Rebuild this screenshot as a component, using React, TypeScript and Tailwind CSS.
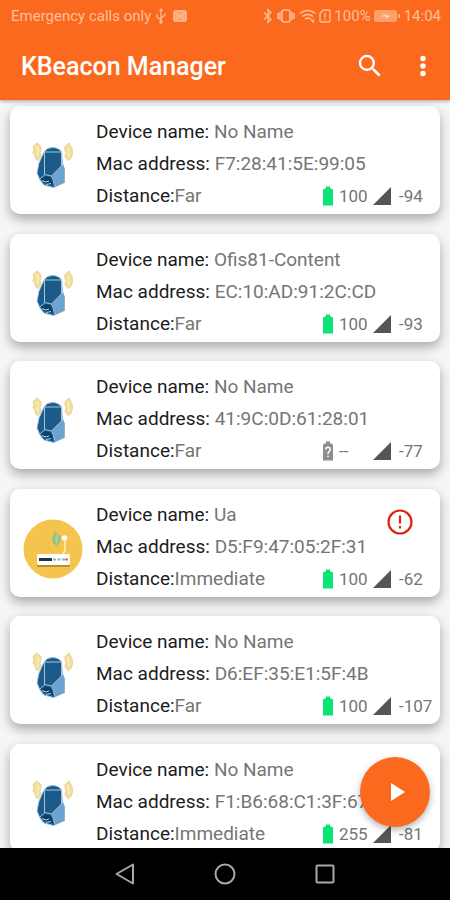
import React from "react";

type Device = {
  kind: "tag" | "gateway";
  name: string;
  mac: string;
  distance: string;
  battery: string | null;
  rssi: number;
  alert?: boolean;
};

const devices: Device[] = [
  { kind: "tag", name: "No Name", mac: "F7:28:41:5E:99:05", distance: "Far", battery: "100", rssi: -94 },
  { kind: "tag", name: "Ofis81-Content", mac: "EC:10:AD:91:2C:CD", distance: "Far", battery: "100", rssi: -93 },
  { kind: "tag", name: "No Name", mac: "41:9C:0D:61:28:01", distance: "Far", battery: null, rssi: -77 },
  { kind: "gateway", name: "Ua", mac: "D5:F9:47:05:2F:31", distance: "Immediate", battery: "100", rssi: -62, alert: true },
  { kind: "tag", name: "No Name", mac: "D6:EF:35:E1:5F:4B", distance: "Far", battery: "100", rssi: -107 },
  { kind: "tag", name: "No Name", mac: "F1:B6:68:C1:3F:67", distance: "Immediate", battery: "255", rssi: -81 },
];

function TagIcon() {
  return (
    <svg viewBox="0 0 60 60" className="mt-1 size-[60px]" aria-hidden="true">
      <g fill="#f3dfa0" stroke="#ead08a" strokeWidth="1">
        <path d="M14 7l4 3.500v4l-1 2 1 4-3 4-2-1-1-4-2-3 1-3-1-3z" />
        <path d="M46 7l-4 3.500v4l1 2-1 4 3 4 3-2 1.500-5-.5-5z" />
      </g>
      <path d="M14 11l1.500 4-1.500 5M46 11l-1 4 1.500 5" fill="none" stroke="#fbf3d8" strokeWidth="1" />
      <path d="M21 16q3-4.500 8-4.500 7 0 9.500 4.500l1 12 2 5v13.500l-5.500 2.500-5.500 2.500-9.500-2.500-4-5-3-7 2-10z" fill="#1c5a88" stroke="#9cc6e4" strokeWidth="1" strokeLinejoin="round" />
      <path d="M40 28.500l1.500 4v14l-5.500 2.500-4.500 1.500-1-6-1.500-5z" fill="#6ca3d0" />
      <path d="M21.500 16v22.500l7 1.500L40 28.500M21.500 16h17M38.500 16v14M28.500 40l2 4.500 1 5M17 43l5-4.500" fill="none" stroke="#9cc6e4" strokeWidth="1" />
      <path d="M18 42.500l5-2.500 5 2 2 7-7-1.500z" fill="#123f66" />
      <path d="M19 44.500l4 1.500 3-1M23 48.500l5-1" fill="none" stroke="#a9d0ea" strokeWidth="1" />
    </svg>
  );
}

function GatewayIcon() {
  return (
    <svg viewBox="0 0 60 60" className="mt-1 size-[60px]" aria-hidden="true">
      <circle cx="30" cy="30" r="29.500" fill="#f4c44f" />
      <path d="M33 13l3 4 1 4-3 6-4-4v-5z" fill="#8fc98c" stroke="#7dbb87" />
      <path d="M34 14v12" stroke="#c4d98c" />
      <circle cx="41.500" cy="19" r="2.800" fill="#fffdf5" />
      <path d="M42 20v11l-2 4" fill="none" stroke="#fff3c9" strokeWidth="1.500" />
      <rect x="14" y="37" width="33" height="11" rx="1.500" fill="#b78f3a" />
      <rect x="14" y="35" width="33" height="11" rx="1.500" fill="#fffefb" />
      <rect x="16" y="39" width="13" height="3" fill="#233449" />
      <path d="M30 40.500h12" stroke="#7fb9c4" strokeWidth="2" strokeDasharray="3 1.500" />
      <circle cx="43.500" cy="40.500" r="1.200" fill="#d9483b" />
    </svg>
  );
}

function BatteryIcon({ known }: { known: boolean }) {
  return (
    <svg viewBox="0 0 10 20" className="h-5 w-[10px] shrink-0" aria-hidden="true">
      <path d="M3 0.500h4v1.500l3 1.500v16H0v-16L3 2z" fill={known ? "#0ce575" : "#8d8d8d"} />
      {!known && (
        <path
          d="M2.700 8.500c0-3 4.600-3 4.600 0 0 2-2.300 1.800-2.300 4.500M5 14.500V16"
          fill="none"
          stroke="#fff"
          strokeWidth="1.500"
        />
      )}
    </svg>
  );
}

function DeviceCard({ device }: { device: Device }) {
  return (
    <li className="relative mx-[10px] flex h-[108px] shrink-0 items-center rounded-[10px] bg-white pt-2 pl-[13px] shadow-[0_5px_12px_rgba(0,0,0,0.32)] odd:mb-5 even:mb-[19px]">
      {device.kind === "tag" ? <TagIcon /> : <GatewayIcon />}
      <div className="ml-[13px] min-w-0 flex-1 text-[19px] leading-8 whitespace-nowrap text-[#757575]">
        <p>
          <span className="text-[#1c1c1c]">Device name:</span> {device.name}
        </p>
        <p>
          <span className="text-[#1c1c1c]">Mac address:</span> {device.mac}
        </p>
        <div className="flex">
          <p className="flex-1">
            <span className="text-[#1c1c1c]">Distance:</span>
            {device.distance}
          </p>
          <div className="flex w-[117px] items-center text-[17px]">
            <BatteryIcon known={device.battery !== null} />
            <span className="ml-[6px] w-[34px]">{device.battery ?? "--"}</span>
            <svg viewBox="0 0 18 18" className="size-[18px] shrink-0" aria-hidden="true">
              <path d="M0 18L18 0v18z" fill="#555" />
            </svg>
            <span className="ml-2">{device.rssi}</span>
          </div>
        </div>
      </div>
      {device.alert && (
        <svg viewBox="0 0 26 26" className="absolute top-5 right-[27px] size-[26px]" role="img" aria-label="Alert">
          <circle cx="13" cy="13" r="11.500" fill="none" stroke="#d8290c" strokeWidth="2.200" />
          <path d="M13 6.500v8M13 17v2.500" stroke="#d8290c" strokeWidth="2.200" />
        </svg>
      )}
    </li>
  );
}

function StatusBar() {
  return (
    <div className="flex h-8 items-center pr-[9px] pl-[11px] text-[15px] text-[#ffc09c]">
      <span>Emergency calls only</span>
      <svg viewBox="0 0 12 16" className="ml-1 h-4 w-3" fill="none" stroke="currentColor" strokeWidth="1.200" aria-hidden="true">
        <path d="M6 2v12M6 12L2 9V6M6 10l4-3V5M4.500 3L6 1l1.500 2" />
        <circle cx="6" cy="14" r="1.200" fill="currentColor" />
      </svg>
      <svg viewBox="0 0 14 12" className="ml-[6px] h-3 w-[14px]" fill="none" stroke="currentColor" aria-hidden="true">
        <rect x="1" y="1" width="12" height="10" rx="1.500" fill="#ff9f6c" strokeWidth="1.500" />
        <path d="M2.500 3.500L7 6.500l4.500-3M3 9l2.500-2M11 9L8.500 7" strokeWidth="1.200" />
      </svg>
      <div className="ml-auto flex items-center">
        <svg viewBox="0 0 10 16" className="h-4 w-[10px]" fill="none" stroke="currentColor" strokeWidth="1.300" aria-hidden="true">
          <path d="M1 4.500l7 7L5 14.500V1.500l3 3-7 7" />
        </svg>
        <svg viewBox="0 0 18 16" className="ml-1 h-4 w-[18px]" fill="none" stroke="currentColor" strokeWidth="1.500" aria-hidden="true">
          <rect x="5" y="2" width="8" height="12" rx="2" />
          <path d="M3 4v8M15 4v8M1 5v6M17 5v6" />
        </svg>
        <svg viewBox="0 0 18 16" className="ml-1 h-4 w-[18px]" fill="none" stroke="currentColor" strokeWidth="1.600" aria-hidden="true">
          <path d="M1 5.500c4.500-4 11-4 15.500 0M3.500 8.500c3-2.600 7.500-2.600 10.500 0M6 11.200c1.700-1.400 3.800-1.400 5.500 0" />
          <path d="M8.800 13.500h.1M12 11l1.500 2.500L15 11M13.500 14h2" strokeWidth="1.200" />
        </svg>
        <svg viewBox="0 0 12 16" className="ml-[2px] h-4 w-3" fill="none" stroke="currentColor" strokeWidth="1.300" aria-hidden="true">
          <path d="M4.500 2H10q1 0 1 1v10q0 1-1 1H2q-1 0-1-1V5.500zM6 5v4.500M6 10.800v1.500" />
        </svg>
        <span className="ml-[3px]">100%</span>
        <svg viewBox="0 0 26 14" className="ml-[3px] h-[14px] w-[26px]" aria-hidden="true">
          <rect x="0" y="1" width="23" height="12" rx="2" fill="#ff9f6c" />
          <path d="M25 5v4" stroke="currentColor" strokeWidth="1.500" />
          <path d="M7 7.500l5-2.500v1.500h5L12 9.500V7.500z" fill="#ffd9c4" />
        </svg>
        <span className="ml-1">14:04</span>
      </div>
    </div>
  );
}

export default function App() {
  return (
    <div className="flex h-screen flex-col overflow-hidden bg-[#f6f6f6] font-[Roboto,sans-serif]">
      <header className="z-10 shrink-0 bg-[#fb691e] shadow-[0_1px_4px_rgba(0,0,0,0.35)]">
        <StatusBar />
        <div className="flex h-[68px] items-center pr-[13px] pl-[21px] text-white">
          <h1 className="flex-1 pt-[2px] text-[25px] font-medium whitespace-nowrap">KBeacon Manager</h1>
          <button type="button" aria-label="Search" className="mr-6">
            <svg viewBox="0 0 24 24" className="size-[30px]" fill="currentColor">
              <path d="M15.500 14h-.79l-.28-.27A6.471 6.471 0 0 0 16 9.500 6.500 6.500 0 1 0 9.500 16c1.610 0 3.090-.59 4.230-1.570l.27.28v.79l5 4.990L20.490 19l-4.990-5zm-6 0C7.010 14 5 11.990 5 9.500S7.010 5 9.500 5 14 7.010 14 9.500 11.990 14 9.500 14z" />
            </svg>
          </button>
          <button type="button" aria-label="More options">
            <svg viewBox="0 0 28 28" className="size-7" fill="currentColor">
              <circle cx="14" cy="6.500" r="2.700" />
              <circle cx="14" cy="14" r="2.700" />
              <circle cx="14" cy="21.500" r="2.700" />
            </svg>
          </button>
        </div>
      </header>
      <main className="relative min-h-0 flex-1">
        <ul className="flex h-full flex-col overflow-hidden pt-[6px]">
          {devices.map((device) => (
            <DeviceCard key={device.mac} device={device} />
          ))}
        </ul>
        <button
          type="button"
          aria-label="Start scan"
          className="absolute right-5 bottom-[21px] flex size-[70px] items-center justify-center rounded-full bg-[#fb691e] shadow-[0_3px_7px_rgba(0,0,0,0.3)]"
        >
          <svg viewBox="0 0 14 18" className="ml-[6px] h-[18px] w-[14px]" fill="#fff">
            <path d="M0 0l14 9-14 9z" />
          </svg>
        </button>
      </main>
      <nav className="z-10 flex h-[52px] shrink-0 items-center justify-center gap-[76px] bg-black">
        <button type="button" aria-label="Back">
          <svg viewBox="0 0 24 24" className="size-6" fill="none" stroke="#a9a9a9" strokeWidth="2" strokeLinejoin="round">
            <path d="M20 2.500v19L3.500 12z" />
          </svg>
        </button>
        <button type="button" aria-label="Home">
          <svg viewBox="0 0 24 24" className="size-6" fill="none" stroke="#a9a9a9" strokeWidth="2">
            <circle cx="12" cy="12" r="9.500" />
          </svg>
        </button>
        <button type="button" aria-label="Recent apps">
          <svg viewBox="0 0 24 24" className="size-6" fill="none" stroke="#a9a9a9" strokeWidth="2">
            <rect x="3.500" y="3.500" width="17" height="17" rx="1" />
          </svg>
        </button>
      </nav>
    </div>
  );
}
